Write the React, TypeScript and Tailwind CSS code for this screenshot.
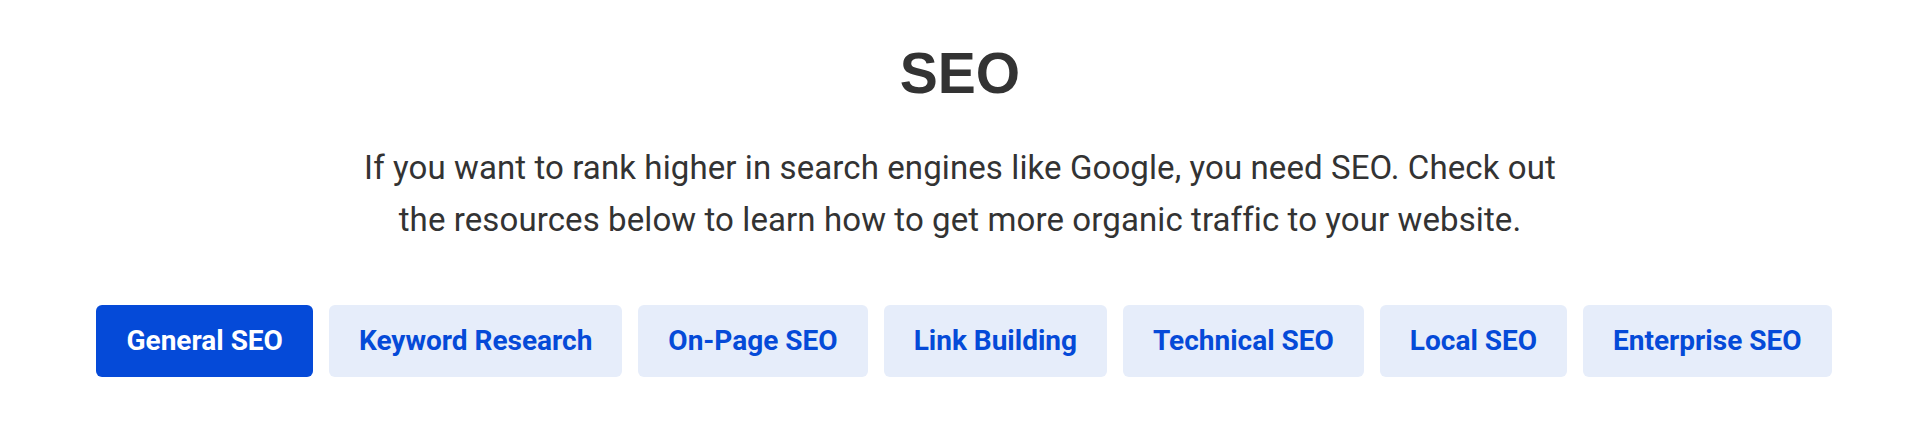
import React, { useState } from 'react';

const TABS = [
  'General SEO',
  'Keyword Research',
  'On-Page SEO',
  'Link Building',
  'Technical SEO',
  'Local SEO',
  'Enterprise SEO',
];

export default function App() {
  const [active, setActive] = useState(0);

  return (
    <div className="w-full h-[447px] bg-white flex flex-col items-center pt-[41px]">
      <h1 className="font-['Liberation_Sans',Arial,sans-serif] font-bold text-[57px] leading-[64px] text-[#333333]">
        SEO
      </h1>
      <p className="mt-[37px] w-[1220px] text-center font-['Roboto',sans-serif] text-[33px] tracking-[0.1px] leading-[52px] text-[#333333]">
        If you want to rank higher in search engines like Google, you need SEO. Check out the resources below to learn how to get more organic traffic to your website.
      </p>
      <div className="mt-[59px] flex items-center gap-4 pl-[8px]">
        {TABS.map((tab, i) => (
          <button
            key={tab}
            onClick={() => setActive(i)}
            className={`h-[72px] px-[30px] rounded-md font-['Roboto',sans-serif] font-bold text-[28px] transition-colors ${
              i === active ? 'bg-[#054ad8] text-white' : 'bg-[#e6edfa] text-[#054ad8] hover:bg-[#d8e3f8]'
            }`}
          >
            {tab}
          </button>
        ))}
      </div>
    </div>
  );
}
